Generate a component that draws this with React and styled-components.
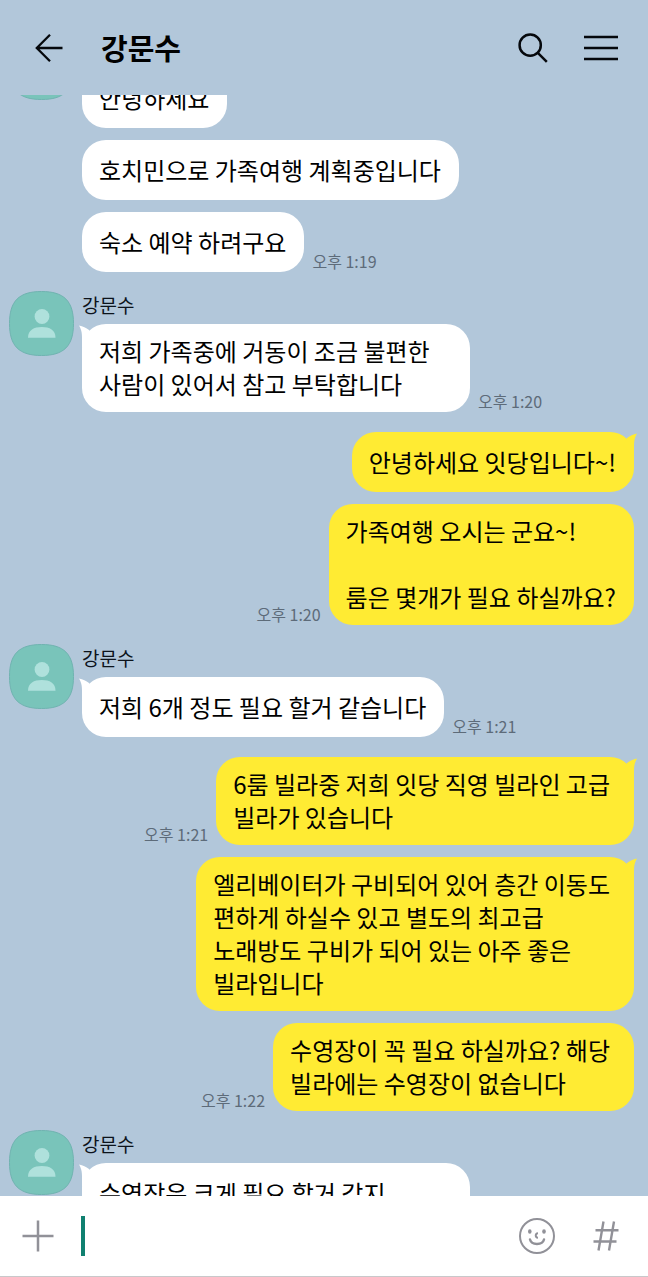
/* eslint-disable react/prop-types */
import React from 'react';
import styled, { createGlobalStyle } from 'styled-components';

const NAME = '강문수';

const groups = [
  {
    from: 'them',
    messages: [
      { text: '안녕하세요', tail: true },
      { text: '호치민으로 가족여행 계획중입니다' },
      { text: '숙소 예약 하려구요', time: '오후 1:19' },
    ],
  },
  {
    from: 'them',
    sender: NAME,
    messages: [
      { text: '저희 가족중에 거동이 조금 불편한\n사람이 있어서 참고 부탁합니다', time: '오후 1:20', tail: true, wide: true },
    ],
  },
  {
    from: 'me',
    messages: [
      { text: '안녕하세요 잇당입니다~!', tail: true },
      { text: '가족여행 오시는 군요~!\n\n룸은 몇개가 필요 하실까요?', time: '오후 1:20' },
    ],
  },
  {
    from: 'them',
    sender: NAME,
    messages: [
      { text: '저희 6개 정도 필요 할거 같습니다', time: '오후 1:21', tail: true },
    ],
  },
  {
    from: 'me',
    messages: [
      { text: '6룸 빌라중 저희 잇당 직영 빌라인 고급\n빌라가 있습니다', time: '오후 1:21', tail: true, wrapped: true },
      { text: '엘리베이터가 구비되어 있어 층간 이동도\n편하게 하실수 있고 별도의 최고급\n노래방도 구비가 되어 있는 아주 좋은\n빌라입니다', tail: true, wrapped: true },
      { text: '수영장이 꼭 필요 하실까요? 해당\n빌라에는 수영장이 없습니다', time: '오후 1:22', wrapped: true },
    ],
  },
  {
    from: 'them',
    sender: NAME,
    messages: [
      { text: '수영장은 크게 필요 할거 같지', tail: true, wide: true },
    ],
  },
];

export default function App() {
  return (
    <Screen>
      <GlobalStyle />
      <Header>
        <IconButton type="button" aria-label="뒤로">
          <BackIcon />
        </IconButton>
        <Title>{NAME}</Title>
        <Actions>
          <IconButton type="button" aria-label="검색">
            <SearchIcon />
          </IconButton>
          <IconButton type="button" aria-label="메뉴">
            <MenuIcon />
          </IconButton>
        </Actions>
      </Header>
      <Chat>
        <Thread>
          {groups.map((group, i) => (
            <MessageGroup key={i} {...group} />
          ))}
        </Thread>
      </Chat>
      <Composer>
        <IconButton type="button" aria-label="첨부">
          <PlusIcon />
        </IconButton>
        <Caret />
        <MessageInput type="text" aria-label="메시지 입력" />
        <Actions>
          <IconButton type="button" aria-label="이모티콘">
            <SmileIcon />
          </IconButton>
          <IconButton type="button" aria-label="샵검색">
            <HashIcon />
          </IconButton>
        </Actions>
      </Composer>
    </Screen>
  );
}

function MessageGroup({ from, sender, messages }) {
  const mine = from === 'me';
  return (
    <Group $mine={mine}>
      {!mine && <Avatar />}
      <Body>
        {!mine && <Sender>{sender}</Sender>}
        <Messages>
          {messages.map(({ text, time, tail, wide, wrapped }) => (
            <Row key={text} $mine={mine}>
              <Bubble $mine={mine} $wide={wide} $wrapped={wrapped}>
                {tail && <Tail mine={mine} />}
                <span>{text}</span>
              </Bubble>
              {time && <Time>{time}</Time>}
            </Row>
          ))}
        </Messages>
      </Body>
    </Group>
  );
}

function Tail({ mine }) {
  return (
    <TailSvg $mine={mine} width="14" height="24" viewBox="0 0 14 24" aria-hidden="true">
      <path d="M0 1.5C4 2 7 4 10 6L14 14L3 24V14C3 8 2 5 0 1.5Z" />
    </TailSvg>
  );
}

function Avatar() {
  return (
    <AvatarSvg width="65" height="65" viewBox="0 0 65 65" aria-hidden="true">
      <path
        d="M32.5 .5C55 .5 64.5 10 64.5 32.5S55 64.5 32.5 64.5S.5 55 .5 32.5S10 .5 32.5 .5Z"
        fill="#79c4ba"
        stroke="#70b3b0"
      />
      <circle cx="33" cy="25.5" r="7.4" fill="#afe1dc" />
      <path d="M19 46.8C19 39 25 36 32.8 36S46.5 39 46.5 46.8Z" fill="#afe1dc" />
    </AvatarSvg>
  );
}

function BackIcon() {
  return (
    <svg width="28" height="28" viewBox="0 0 28 28" fill="none" stroke="#05080c" strokeWidth="2.3">
      <path d="M15 .8L1.8 14L15 27.2M1.8 14H27.5" />
    </svg>
  );
}

function SearchIcon() {
  return (
    <svg width="30" height="30" viewBox="0 0 30 30" fill="none" stroke="#05080c" strokeWidth="2.5">
      <circle cx="12.2" cy="12.2" r="10.6" />
      <path d="M19.8 19.8L28.8 28.8" />
    </svg>
  );
}

function MenuIcon() {
  return (
    <svg width="34" height="26" viewBox="0 0 34 26" fill="none" stroke="#05080c" strokeWidth="2.4">
      <path d="M0 2H34M0 13H34M0 24H34" />
    </svg>
  );
}

function PlusIcon() {
  return (
    <svg width="32" height="32" viewBox="0 0 32 32" fill="none" stroke="#919198" strokeWidth="2.5">
      <path d="M16 .5V31.5M.5 16H31.5" />
    </svg>
  );
}

function SmileIcon() {
  return (
    <svg width="36" height="36" viewBox="0 0 36 36" fill="none" stroke="#919198" strokeWidth="2">
      <circle cx="18" cy="18" r="17" />
      <path d="M11 21.5C12.5 27.5 23.5 27.5 25 21.5" strokeWidth="2.4" strokeLinecap="round" />
      <path d="M19 15.2C16 15.4 16 19.6 19 19.8" />
      <ellipse cx="10.8" cy="13.5" rx="1.8" ry="2.3" fill="#919198" stroke="none" />
      <ellipse cx="25" cy="13.5" rx="1.8" ry="2.3" fill="#919198" stroke="none" />
    </svg>
  );
}

function HashIcon() {
  return (
    <svg width="26" height="30" viewBox="0 0 26 30" fill="none" stroke="#919198" strokeWidth="2.4">
      <path d="M10.5 .5L5.5 29.5M21 .5L16 29.5M2.5 9.2H25.5M.5 20.5H23.5" />
    </svg>
  );
}

const GlobalStyle = createGlobalStyle`
  * {
    box-sizing: border-box;
  }
  body {
    margin: 0;
    background: #b2c7da;
    color: #000;
    font-family: 'Noto Sans CJK KR', 'Noto Sans', sans-serif;
  }
  svg {
    display: block;
  }
`;

const Screen = styled.main`
  display: flex;
  flex-direction: column;
  height: 100vh;
`;

const Header = styled.header`
  flex: none;
  display: flex;
  align-items: center;
  height: 95px;
  padding: 0 30px 0 35px;
`;

const Title = styled.h1`
  flex: 1;
  margin: 0 0 0 38px;
  padding-bottom: 2px;
  font-size: 29px;
  line-height: 40px;
  font-weight: 700;
`;

const Actions = styled.div`
  display: flex;
  align-items: center;
  gap: 36px;
`;

const IconButton = styled.button`
  flex: none;
  padding: 0;
  border: 0;
  background: none;
  cursor: pointer;
`;

const Chat = styled.section`
  flex: 1;
  min-height: 0;
  overflow: hidden;
`;

// scrolled a little way into the conversation
const Thread = styled.div`
  margin-top: -60px;
`;

const Group = styled.div`
  display: flex;
  gap: 8px;
  margin-top: ${props => (props.$mine ? '20px' : '19px')};
  padding: 0 14px 0 9px;
  &:first-child {
    margin-top: 0;
  }
`;

const Body = styled.div`
  flex: 1;
  min-width: 0;
`;

const Sender = styled.div`
  height: 33px;
  color: #0c131b;
  font-size: 19px;
  line-height: 28px;
`;

const Messages = styled.div`
  display: flex;
  flex-direction: column;
  gap: 12px;
`;

const Row = styled.div`
  display: flex;
  flex-direction: ${props => (props.$mine ? 'row-reverse' : 'row')};
  align-items: flex-end;
  gap: 8px;
`;

const Bubble = styled.div`
  position: relative;
  display: flex;
  align-items: center;
  width: ${props => (props.$wide ? '388px' : 'auto')};
  min-height: 60px;
  padding: 10px 18px 12px 17px;
  padding-right: ${props => (props.$wrapped ? '24px' : '18px')};
  border-radius: 24px;
  background: ${props => (props.$mine ? '#ffeb33' : '#fff')};
  fill: ${props => (props.$mine ? '#ffeb33' : '#fff')};
  font-size: 24px;
  line-height: 33px;
  white-space: pre-line;
  word-break: keep-all;
`;

const TailSvg = styled.svg`
  position: absolute;
  top: 0;
  ${props => (props.$mine ? 'right: -3px; transform: scaleX(-1);' : 'left: -3px;')}
`;

const Time = styled.time`
  flex: none;
  padding-bottom: 1px;
  color: #5d6b79;
  font-size: 16px;
  line-height: 20px;
`;

const AvatarSvg = styled.svg`
  flex: none;
`;

const Composer = styled.footer`
  flex: none;
  display: flex;
  align-items: center;
  height: 81px;
  padding: 0 29px 0 22px;
  border-bottom: 1px solid #c8c8ca;
  background: #fff;
  ${Actions} {
    gap: 38px;
  }
`;

const Caret = styled.span`
  flex: none;
  width: 4px;
  height: 40px;
  margin-left: 27px;
  background: #108070;
`;

const MessageInput = styled.input`
  flex: 1;
  min-width: 0;
  height: 40px;
  padding: 0 8px;
  border: 0;
  outline: 0;
  background: none;
  font: inherit;
  font-size: 24px;
  caret-color: #108070;
`;
